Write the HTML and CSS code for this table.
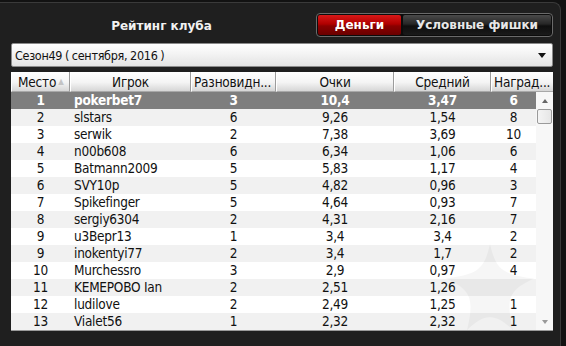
FILE: index.html
```html
<!DOCTYPE html>
<html lang="ru">
<head>
<meta charset="utf-8">
<title>Рейтинг клуба</title>
<link rel="stylesheet" href="styles.css">
</head>
<body>
<div class="frame">
  <div class="topbar">
    <div class="title">Рейтинг клуба</div>
    <div class="tabs">
      <div class="tab tab-active">Деньги</div>
      <div class="tab">Условные фишки</div>
    </div>
  </div>
  <div class="select">
    <span class="select-text">Сезон49 ( сентября, 2016 )</span>
    <span class="select-arrow"></span>
  </div>
  <div class="table">
    <div class="thead">
      <div class="th th-place">Место<span class="sort">▲</span></div>
      <div class="th th-center">Игрок</div>
      <div class="th th-left">Разновидн...</div>
      <div class="th th-center">Очки</div>
      <div class="th th-center">Средний</div>
      <div class="th th-left th-last">Наград...</div>
    </div>
    <div class="tbody">
      <div class="rows">
        <svg class="watermark" viewBox="0 0 100 100" width="96" height="96"><path d="M50 4 C56 30 62 36 96 40 C70 52 66 60 74 94 C56 76 44 76 26 94 C34 60 30 52 4 40 C38 36 44 30 50 4 Z"/></svg>
        <div class="row row-sel"><div>1</div><div class="name">pokerbet7</div><div>3</div><div>10,4</div><div>3,47</div><div>6</div></div>
        <div class="row"><div>2</div><div class="name">slstars</div><div>6</div><div>9,26</div><div>1,54</div><div>8</div></div>
        <div class="row"><div>3</div><div class="name">serwik</div><div>2</div><div>7,38</div><div>3,69</div><div>10</div></div>
        <div class="row"><div>4</div><div class="name">n00b608</div><div>6</div><div>6,34</div><div>1,06</div><div>6</div></div>
        <div class="row"><div>5</div><div class="name">Batmann2009</div><div>5</div><div>5,83</div><div>1,17</div><div>4</div></div>
        <div class="row"><div>6</div><div class="name">SVY10p</div><div>5</div><div>4,82</div><div>0,96</div><div>3</div></div>
        <div class="row"><div>7</div><div class="name">Spikefinger</div><div>5</div><div>4,64</div><div>0,93</div><div>7</div></div>
        <div class="row"><div>8</div><div class="name">sergiy6304</div><div>2</div><div>4,31</div><div>2,16</div><div>7</div></div>
        <div class="row"><div>9</div><div class="name">u3Bepr13</div><div>1</div><div>3,4</div><div>3,4</div><div>2</div></div>
        <div class="row"><div>9</div><div class="name">inokentyi77</div><div>2</div><div>3,4</div><div>1,7</div><div>2</div></div>
        <div class="row"><div>10</div><div class="name">Murchessro</div><div>3</div><div>2,9</div><div>0,97</div><div>4</div></div>
        <div class="row"><div>11</div><div class="name">KEMEPOBO Ian</div><div>2</div><div>2,51</div><div>1,26</div><div></div></div>
        <div class="row"><div>12</div><div class="name">ludilove</div><div>2</div><div>2,49</div><div>1,25</div><div>1</div></div>
        <div class="row"><div>13</div><div class="name">Vialet56</div><div>1</div><div>2,32</div><div>2,32</div><div>1</div></div>
      </div>
      <div class="scrollbar">
        <span class="sb-up"></span>
        <span class="sb-thumb"></span>
        <span class="sb-space"></span>
        <span class="sb-down"></span>
      </div>
    </div>
  </div>
</div>
</body>
</html>
```
FILE: styles.css
```css
html, body {
  margin: 0;
  padding: 0;
  width: 566px;
  height: 346px;
  overflow: hidden;
  background: #121212;
}
.frame {
  box-sizing: border-box;
  margin: 2px 5px 0 0;
  height: 344px;
  padding: 10px 7px 0 11px;
  background: #1f1f1f;
  border-top: 1px solid #3a3a3a;
  border-right: 1px solid #3a3a3a;
  border-top-right-radius: 8px;
  font-family: "Liberation Sans Narrow", "DejaVu Sans Condensed", "Liberation Sans", sans-serif;
}
.topbar {
  display: flex;
  align-items: center;
  height: 24px;
}
.title {
  flex: 1;
  text-align: center;
  color: #f2f2f2;
  font-family: "DejaVu Sans", sans-serif;
  font-weight: bold;
  font-size: 12px;
  padding-right: 4px;
  padding-top: 1px;
}
.tabs {
  display: flex;
  gap: 2px;
  padding: 1px;
  background: #0c0c0c;
  border: 1px solid #6a6a6a;
  border-radius: 4px;
  height: 20px;
}
.tab {
  display: flex;
  align-items: center;
  justify-content: center;
  color: #e8e8e8;
  font-family: "DejaVu Sans", sans-serif;
  font-weight: bold;
  font-size: 12px;
  width: 148px;
  border-radius: 2px;
  background: linear-gradient(#4a4a4a, #262626 45%, #0e0e0e 55%, #1a1a1a);
}
.tab-active {
  width: 83px;
  color: #fff;
  background: linear-gradient(#d81818, #b00000 45%, #8a0000 55%, #6a0000);
}
.select {
  box-sizing: border-box;
  margin-top: 6px;
  height: 24px;
  display: flex;
  align-items: center;
  justify-content: space-between;
  padding: 0 6px 0 3px;
  background: linear-gradient(#ffffff, #f2f2f2 50%, #e2e2e2);
  border: 1px solid #8a8a8a;
  border-radius: 2px;
  color: #111;
  font-size: 12.5px;
  letter-spacing: -0.3px;
  word-spacing: -0.5px;
}
.select-arrow {
  width: 0;
  height: 0;
  border-left: 4px solid transparent;
  border-right: 4px solid transparent;
  border-top: 5px solid #111;
}
.table {
  margin-top: 5px;
  background: #fff;
  border-bottom: 1px solid #9a9a9a;
}
.thead {
  display: grid;
  grid-template-columns: 59px 121px 85px 118px 97px 62px;
  height: 20px;
}
.th {
  box-sizing: border-box;
  display: flex;
  align-items: center;
  background: linear-gradient(#ffffff, #f4f4f4 55%, #d6d6d6);
  border-left: 1px solid #ffffff;
  border-right: 1px solid #9c9c9c;
  border-bottom: 1px solid #a8a8a8;
  color: #111;
  font-size: 13.5px;
  letter-spacing: -0.2px;
  white-space: nowrap;
  overflow: hidden;
}
.th-center { justify-content: center; }
.th-left { padding-left: 2px; }
.th-place { padding-left: 6px; }
.th-last { border-right: none; }
.sort {
  font-size: 8px;
  color: #c4c4c4;
  margin-left: 2px;
}
.tbody {
  display: flex;
}
.rows {
  position: relative;
  width: 525px;
  overflow: hidden;
}
.watermark {
  position: absolute;
  right: -2px;
  bottom: -6px;
  fill: rgba(0, 0, 0, 0.035);
}
.row {
  position: relative;
  display: grid;
  grid-template-columns: 59px 121px 85px 118px 97px 45px;
  height: 17px;
  align-items: center;
  font-size: 13.5px;
  letter-spacing: -0.25px;
  color: #111;
  text-align: center;
}
.row:nth-child(odd) { background: rgba(0, 0, 0, 0.055); }
.row > div { line-height: 17px; }
.row .name {
  text-align: left;
  padding-left: 4px;
}
.row.row-sel {
  background: #7e7e7e;
  color: #fff;
  font-weight: bold;
}
.scrollbar {
  width: 17px;
  display: flex;
  flex-direction: column;
  align-items: center;
  background: #f7f7f7;
}
.sb-up, .sb-down {
  height: 17px;
  width: 17px;
  display: flex;
  align-items: center;
  justify-content: center;
}
.sb-up::after, .sb-down::after {
  content: "";
  border-left: 3.5px solid transparent;
  border-right: 3.5px solid transparent;
}
.sb-up::after { border-bottom: 4px solid #666; }
.sb-down::after { border-top: 4px solid #999; }
.sb-thumb {
  box-sizing: border-box;
  width: 15px;
  height: 15px;
  border: 1px solid #9a9a9a;
  border-radius: 2px;
  background: linear-gradient(90deg, #f4f4f4, #e6e6e6);
}
.sb-space { flex: 1; }
```
